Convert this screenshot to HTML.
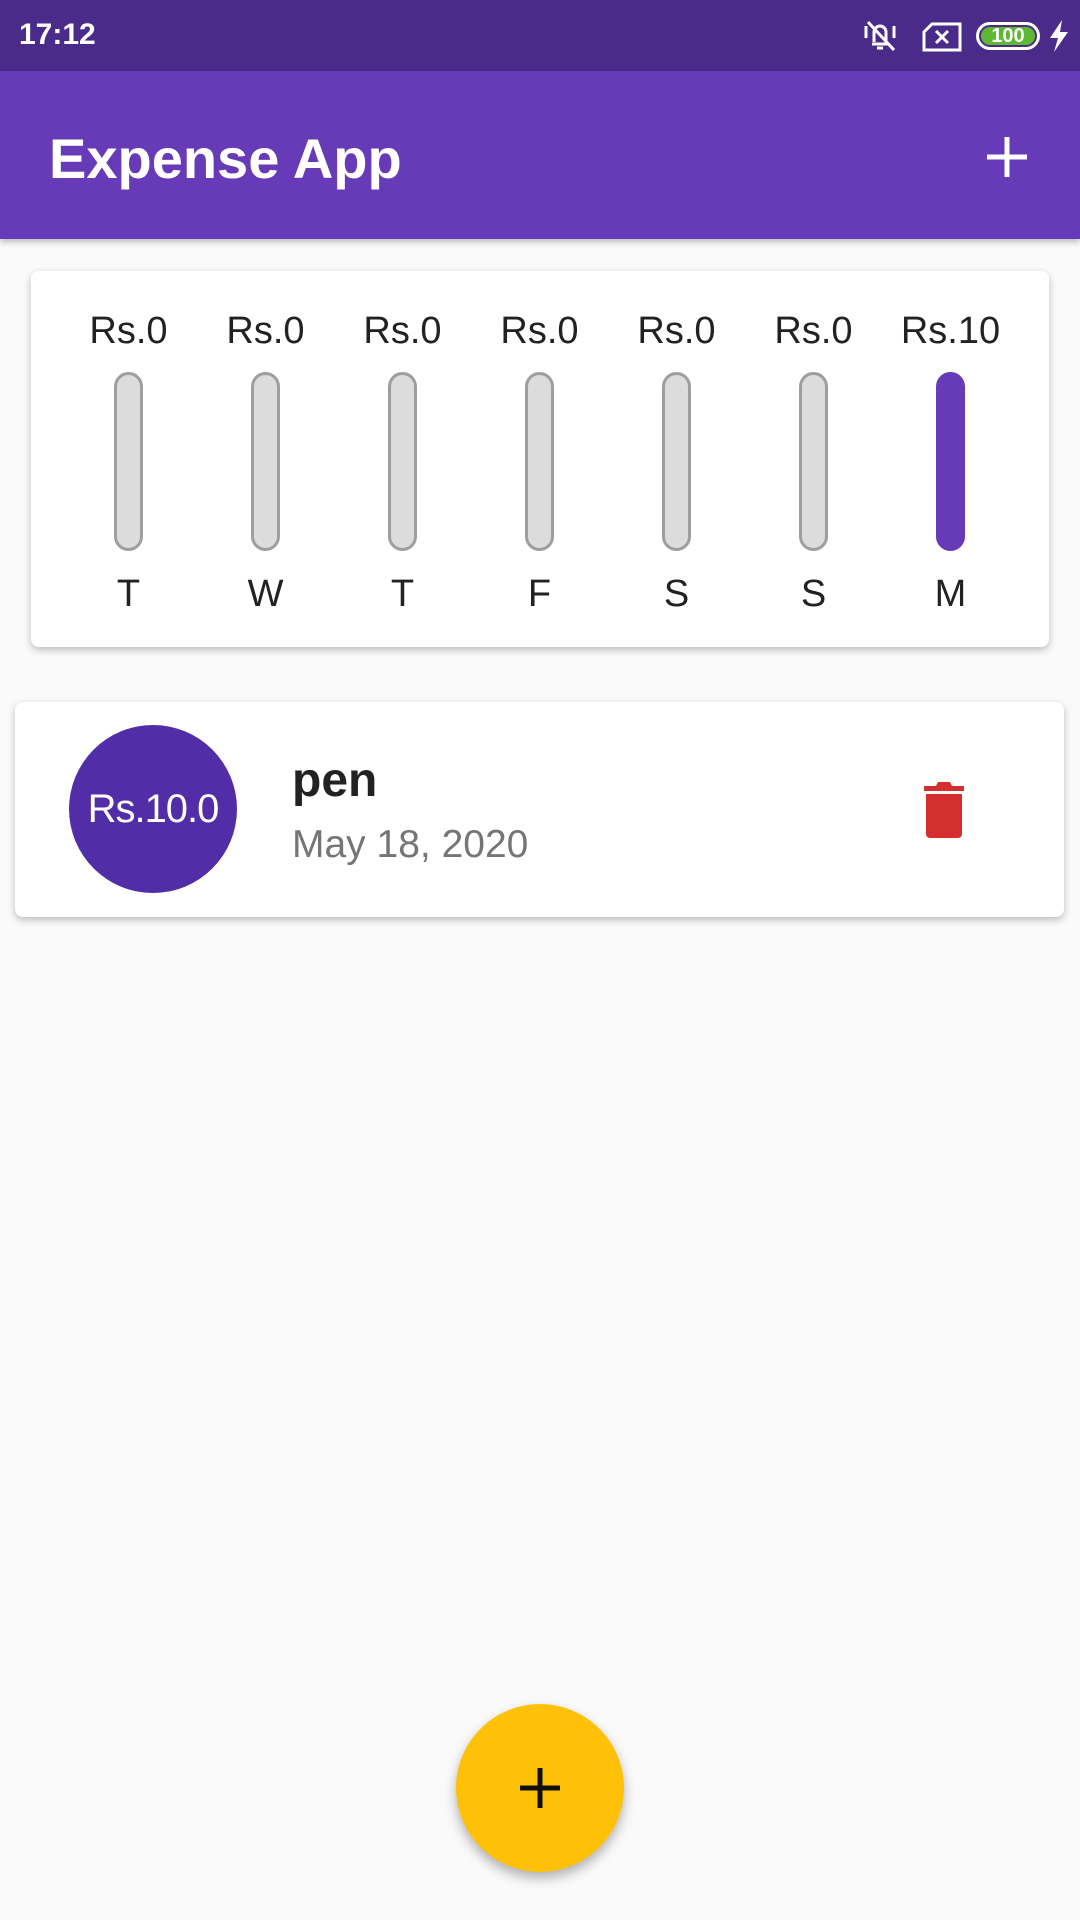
<!DOCTYPE html>
<html><head><meta charset="utf-8"><style>
*{margin:0;padding:0;box-sizing:border-box}
body{width:1080px;height:1920px;background:#fafafa;font-family:"Liberation Sans",sans-serif;position:relative;overflow:hidden}
.sb{position:absolute;left:0;top:0;width:1080px;height:71px;background:#4a2b8a;color:#fff}
.ab{position:absolute;left:0;top:71px;width:1080px;height:168px;background:#673ab7;box-shadow:0 3px 6px rgba(0,0,0,.25)}
.card{position:absolute;background:#fff;border-radius:8px;box-shadow:0 3px 8px rgba(0,0,0,.25)}
.amt{position:absolute;top:310px;font-size:38px;width:137px;text-align:center;color:#222}
.bar{position:absolute;top:372px;width:29px;height:179px;border-radius:15px;background:#dcdcdc;border:3px solid #9e9e9e}
.day{position:absolute;top:573px;font-size:38px;width:137px;text-align:center;color:#222}
</style></head><body>
<div class="sb">
<div style="position:absolute;left:19px;top:18px;font-size:30px;font-weight:bold">17:12</div>
<svg style="position:absolute;left:860px;top:18px" width="40" height="36" viewBox="0 0 40 36" fill="none" stroke="#fff" stroke-width="3"><path d="M12 26h16M14 24V14a6 6 0 0 1 12 0v10M17 30h6M6 8v12M34 8v12M8 4l26 28"/></svg>
<svg style="position:absolute;left:922px;top:22px" width="40" height="30" viewBox="0 0 40 30" fill="none" stroke="#fff" stroke-width="3"><path d="M10 2h28v26H2V10z"/><path d="M14 9l12 12M26 9L14 21"/></svg>
<div style="position:absolute;left:976px;top:22px;width:64px;height:28px;border:3px solid #fff;border-radius:14px;padding:2px"><div style="background:#5fb832;border-radius:10px;height:100%;font-size:20px;font-weight:bold;text-align:center;line-height:18px">100</div></div>
<svg style="position:absolute;left:1048px;top:20px" width="22" height="32" viewBox="0 0 22 32"><path d="M14 0L2 18h8L6 32 20 12h-8z" fill="#fff"/></svg>
</div>
<div class="ab">
<div style="position:absolute;left:49px;top:55px;font-size:56px;font-weight:bold;color:#fff">Expense App</div>
<svg style="position:absolute;left:985px;top:64px" width="44" height="44" viewBox="0 0 44 44"><path d="M22 2v40M2 22h40" stroke="#fff" stroke-width="5"/></svg>
</div>
<div class="card" style="left:31px;top:271px;width:1018px;height:376px"></div>
<div class="amt" style="left:60px">Rs.0</div><div class="amt" style="left:197px">Rs.0</div><div class="amt" style="left:334px">Rs.0</div><div class="amt" style="left:471px">Rs.0</div><div class="amt" style="left:608px">Rs.0</div><div class="amt" style="left:745px">Rs.0</div><div class="amt" style="left:882px">Rs.10</div>
<div class="bar" style="left:114px"></div><div class="bar" style="left:251px"></div><div class="bar" style="left:388px"></div><div class="bar" style="left:525px"></div><div class="bar" style="left:662px"></div><div class="bar" style="left:799px"></div><div class="bar" style="left:936px;background:#673ab7;border-color:#673ab7"></div>
<div class="day" style="left:60px">T</div><div class="day" style="left:197px">W</div><div class="day" style="left:334px">T</div><div class="day" style="left:471px">F</div><div class="day" style="left:608px">S</div><div class="day" style="left:745px">S</div><div class="day" style="left:882px">M</div>
<div class="card" style="left:15px;top:702px;width:1049px;height:215px"></div>
<div style="position:absolute;left:69px;top:725px;width:168px;height:168px;border-radius:50%;background:#512da8;color:#fff;font-size:40px;text-align:center;line-height:168px;letter-spacing:-1px">Rs.10.0</div>
<div style="position:absolute;left:292px;top:753px;font-size:48px;font-weight:bold;color:#222">pen</div>
<div style="position:absolute;left:292px;top:823px;font-size:39px;color:#757575">May 18, 2020</div>
<svg style="position:absolute;left:923px;top:782px" width="42" height="56" viewBox="0 0 42 56"><path d="M15 0h12l2 4h12v5H1V4h12z" fill="#d32f2f"/><path d="M3 12h36v40a4 4 0 0 1-4 4H7a4 4 0 0 1-4-4z" fill="#d32f2f"/></svg>
<div style="position:absolute;left:456px;top:1704px;width:168px;height:168px;border-radius:50%;background:#ffc107;box-shadow:0 6px 12px rgba(0,0,0,.3)"></div>
<svg style="position:absolute;left:518px;top:1766px" width="44" height="44" viewBox="0 0 44 44"><path d="M22 2v40M2 22h40" stroke="#111" stroke-width="5"/></svg>
</body></html>
